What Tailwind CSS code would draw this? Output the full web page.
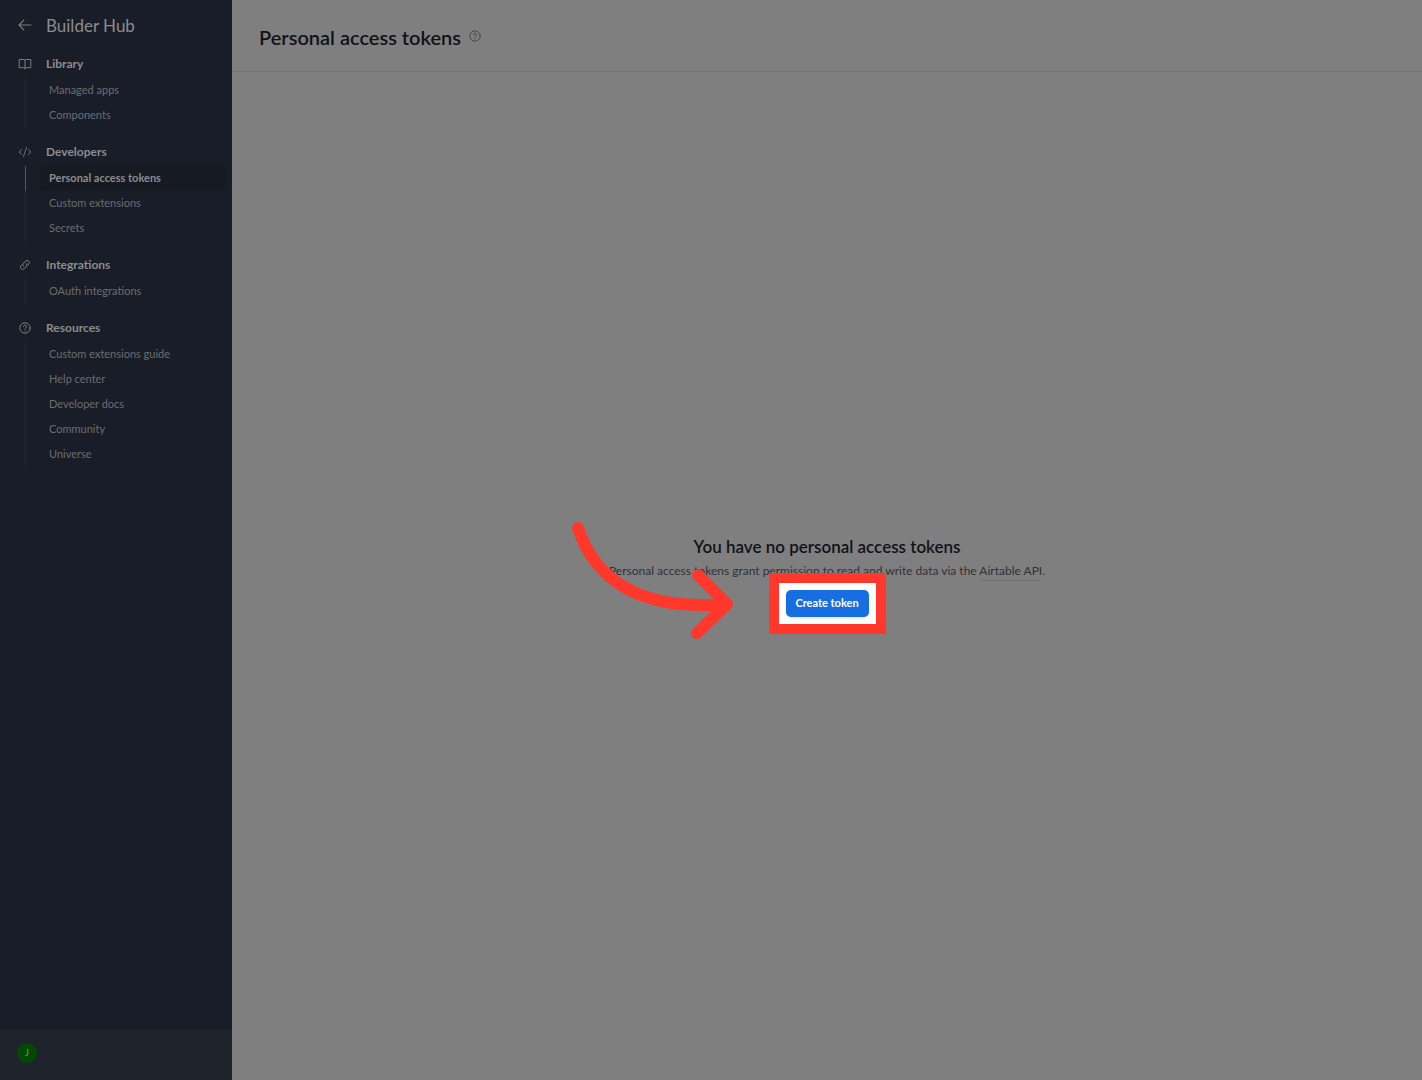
<!DOCTYPE html>
<html lang="en">
  <head>
    <meta charset="UTF-8" />
    <meta name="viewport" content="width=device-width, initial-scale=1.0" />
    <title>Builder Hub - Personal access tokens</title>
    <script src="https://cdn.jsdelivr.net/npm/@tailwindcss/browser@4"></script>
  </head>
  <body
    class="flex min-h-screen bg-[#7f7f7f] font-['Lato','Open_Sans',sans-serif] text-[11px] text-[#101217]"
  >
    <!-- Sidebar -->
    <aside class="flex w-[232px] shrink-0 flex-col bg-[#191d27] text-[#8b8c8e]">
      <div class="flex h-[50px] items-center pt-0.5 pl-[18px]">
        <a href="#" aria-label="Back" class="w-7 text-[#7c7e82]">
          <svg class="size-[14px]" viewBox="0 0 14 14" fill="none" stroke="currentColor" stroke-width="1.1" stroke-linecap="round" stroke-linejoin="round">
            <path d="M13 6H1M5.800 1.200 1 6l4.800 4.800" />
          </svg>
        </a>
        <span class="text-[17px]">Builder Hub</span>
      </div>

      <nav class="flex flex-1 flex-col gap-2.5">
        <section>
          <h2 class="flex h-7 items-center pl-[18px] text-xs font-bold">
            <span class="w-7 text-[#7c7e82]">
              <svg class="size-[14px]" viewBox="0 0 14 14" fill="none" stroke="currentColor" stroke-width="1" stroke-linejoin="round">
                <path d="M7 3.700c0-.8.5-1.200 1.200-1.200h4.600v8.200H8.200c-.7 0-1.200.4-1.200 1.100 0-.7-.5-1.100-1.200-1.100H1.200V2.500h4.600C6.500 2.500 7 2.900 7 3.700v8.600" />
              </svg>
            </span>
            Library
          </h2>
          <ul class="ml-[25px] border-l border-[#232731] text-[#6a6d71]">
            <li class="h-[25px] pr-1.5 pl-3.5"><a href="#" class="flex h-full items-center rounded pl-[9px]">Managed apps</a></li>
            <li class="h-[25px] pr-1.5 pl-3.5"><a href="#" class="flex h-full items-center rounded pl-[9px]">Components</a></li>
          </ul>
        </section>

        <section>
          <h2 class="flex h-7 items-center pl-[18px] text-xs font-bold">
            <span class="w-7 text-[#6c6e72]">
              <svg class="size-[14px]" viewBox="0 0 14 14" fill="none" stroke="currentColor" stroke-width="1" stroke-linecap="round" stroke-linejoin="round">
                <path d="M3.800 4.500 1 7l2.800 2.500M10.200 4.500 13 7l-2.800 2.500M8.500 2.500l-3 9" />
              </svg>
            </span>
            Developers
          </h2>
          <ul class="ml-[25px] border-l border-[#232731] text-[#6a6d71]">
            <li class="-ml-px h-[25px] border-l border-[#55575b] pr-1.5 pl-3.5">
              <a href="#" aria-current="page" class="flex h-full items-center rounded bg-[#161a21] pl-[9px] font-bold text-[#8b8c8e]">Personal access tokens</a>
            </li>
            <li class="h-[25px] pr-1.5 pl-3.5"><a href="#" class="flex h-full items-center rounded pl-[9px]">Custom extensions</a></li>
            <li class="h-[25px] pr-1.5 pl-3.5"><a href="#" class="flex h-full items-center rounded pl-[9px]">Secrets</a></li>
          </ul>
        </section>

        <section>
          <h2 class="flex h-7 items-center pl-[18px] text-xs font-bold">
            <span class="w-7 text-[#7c7e82]">
              <svg class="size-[14px]" viewBox="0 0 14 14" fill="none" stroke="currentColor" stroke-width="1" stroke-linecap="round" stroke-linejoin="round">
                <path d="M5.500 8.300a2.300 2.300 0 0 1 0-3.200l2-2a2.300 2.300 0 0 1 3.200 0 2.300 2.300 0 0 1 0 3.200l-1 1M8.300 5.500a2.300 2.300 0 0 1 0 3.200l-2 2a2.300 2.300 0 0 1-3.200 0 2.300 2.300 0 0 1 0-3.200l1-1" />
              </svg>
            </span>
            Integrations
          </h2>
          <ul class="ml-[25px] border-l border-[#232731] text-[#6a6d71]">
            <li class="h-[25px] pr-1.5 pl-3.5"><a href="#" class="flex h-full items-center rounded pl-[9px]">OAuth integrations</a></li>
          </ul>
        </section>

        <section>
          <h2 class="flex h-7 items-center pl-[18px] text-xs font-bold">
            <span class="w-7 text-[#7c7e82]">
              <svg class="size-[14px]" viewBox="0 0 14 14" fill="none" stroke="currentColor" stroke-width="1" stroke-linecap="round">
                <circle cx="7" cy="7" r="5.200" />
                <path d="M5.500 5.700a1.500 1.500 0 1 1 2.200 1.300c-.5.300-.7.500-.7 1" />
                <circle cx="7" cy="9.700" r=".6" fill="currentColor" stroke="none" />
              </svg>
            </span>
            Resources
          </h2>
          <ul class="ml-[25px] border-l border-[#232731] text-[#6a6d71]">
            <li class="h-[25px] pr-1.5 pl-3.5"><a href="#" class="flex h-full items-center rounded pl-[9px]">Custom extensions guide</a></li>
            <li class="h-[25px] pr-1.5 pl-3.5"><a href="#" class="flex h-full items-center rounded pl-[9px]">Help center</a></li>
            <li class="h-[25px] pr-1.5 pl-3.5"><a href="#" class="flex h-full items-center rounded pl-[9px]">Developer docs</a></li>
            <li class="h-[25px] pr-1.5 pl-3.5"><a href="#" class="flex h-full items-center rounded pl-[9px]">Community</a></li>
            <li class="h-[25px] pr-1.5 pl-3.5"><a href="#" class="flex h-full items-center rounded pl-[9px]">Universe</a></li>
          </ul>
        </section>
      </nav>

      <!-- Account -->
      <div class="flex h-[50px] items-center bg-[#1f232b] pb-1 pl-[17px]">
        <button type="button" aria-label="Account" class="flex size-5 items-center justify-center rounded-full bg-[#024a04] text-[9px] text-[#8b8c8e]">J</button>
      </div>
    </aside>

    <!-- Main -->
    <main class="flex flex-1 flex-col">
      <header class="flex h-[72px] items-center gap-2 border-b border-[#727272] pl-[27px]">
        <h1 class="pt-0.5 text-xl font-semibold">Personal access tokens</h1>
        <button type="button" aria-label="Help" class="text-[#45474b]">
          <svg class="size-3" viewBox="0 0 12 12" fill="none" stroke="currentColor" stroke-width="1" stroke-linecap="round">
            <circle cx="6" cy="6" r="5.200" />
            <path d="M4.500 4.700a1.500 1.500 0 1 1 2.200 1.300c-.5.300-.7.500-.7 1" />
            <circle cx="6" cy="8.700" r=".6" fill="currentColor" stroke="none" />
          </svg>
        </button>
      </header>

      <div class="flex flex-1 flex-col items-center justify-center">
        <h2 class="text-[17px] leading-6 font-semibold">You have no personal access tokens</h2>
        <p class="mt-0.5 text-xs leading-5 text-[#303237]">
          Personal access tokens grant permission to read and write data via the
          <a href="#" class="border-b border-[#707070] pb-0.5">Airtable API</a>.
        </p>
        <div class="relative mt-[9px]">
          <!-- Highlight around the button, with an arrow to it -->
          <div class="absolute -inset-[17px] border-10 border-[#ff382b] bg-white"></div>
          <svg class="absolute -top-[75px] right-full mr-[46px] h-[130px] w-[180px]" viewBox="0 0 180 130" fill="none" stroke="#ff382b" stroke-width="12" stroke-linecap="round" stroke-linejoin="round">
            <path d="M18 13C35 65 80 96 167 89M138 60l29 29-30 29" />
          </svg>
          <button type="button" class="relative block h-[27px] w-[83px] rounded-[5px] bg-[#176ee1] font-bold text-white shadow">Create token</button>
        </div>
      </div>
    </main>
  </body>
</html>
